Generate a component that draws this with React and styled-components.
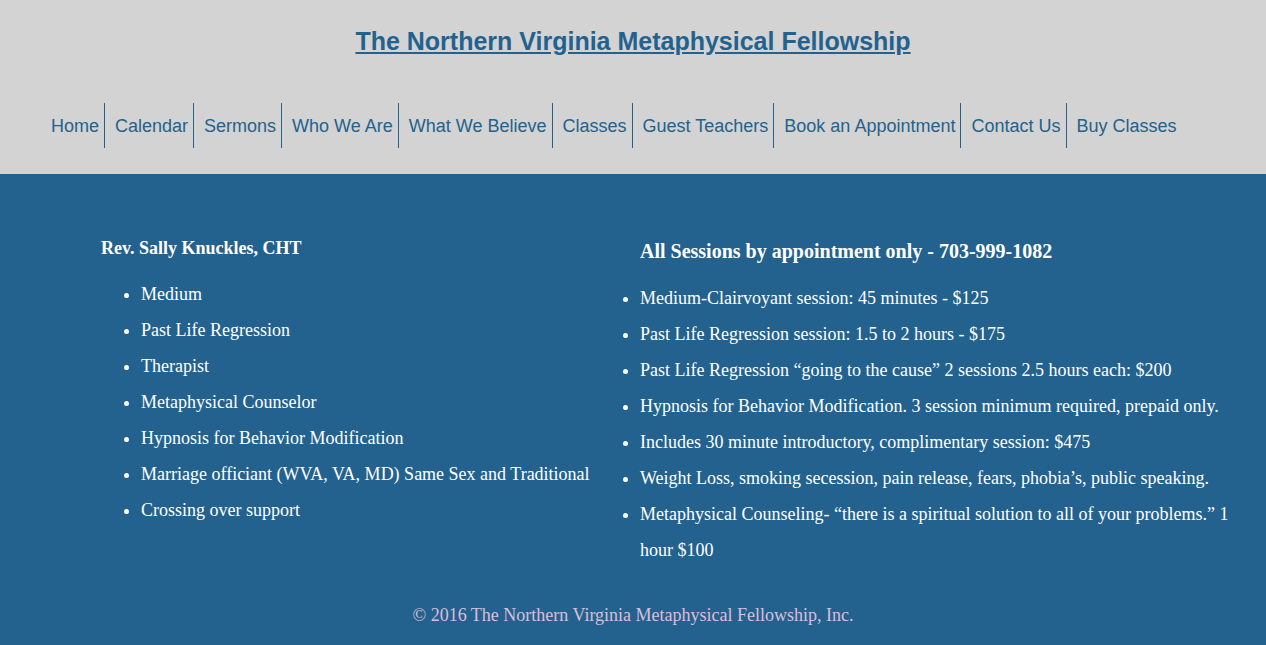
import React from "react";
import styled, { createGlobalStyle } from "styled-components";

const Global = createGlobalStyle`
  html, body { margin: 0; padding: 0; height: 100%; }
  body { background: #d3d3d3; }
  #root { min-height: 100%; display: flex; flex-direction: column; }
`;

const BLUE = "#23628e";

const Page = styled.div`
  flex: 1;
  display: flex;
  flex-direction: column;
  min-height: 100vh;
`;

const Header = styled.header`
  background: #d3d3d3;
  padding: 26px 0 26px 0;
`;

const Title = styled.h1`
  margin: 0;
  text-align: center;
  font-family: "Liberation Sans", Arial, sans-serif;
  font-size: 25px;
  line-height: 30px;
  font-weight: bold;
  a {
    color: ${BLUE};
    text-decoration: underline;
  }
`;

const Nav = styled.nav`
  margin-top: 47px;
  display: flex;
  padding-left: 51px;
`;

const NavItem = styled.a`
  display: flex;
  align-items: center;
  box-sizing: border-box;
  height: 45px;
  padding: 2px 5px 0 ${(p) => (p.$first ? "0" : "10px")};
  border-right: ${(p) => (p.$last ? "none" : `1px solid ${BLUE}`)};
  font-family: "Liberation Sans", Arial, sans-serif;
  font-size: 18px;
  color: ${BLUE};
  text-decoration: none;
  white-space: nowrap;
`;

const Main = styled.main`
  flex: 1;
  background: ${BLUE};
  display: flex;
  flex-direction: column;
  color: #fff;
  font-family: "Liberation Serif", "Times New Roman", serif;
`;

const Columns = styled.div`
  display: flex;
  padding: 0 21px 0 101px;
`;

const Column = styled.section`
  flex: ${(p) => (p.$grow ? "1" : "0 0 499px")};
`;

const Heading = styled.h2`
  margin: ${(p) => p.$top}px 0 0 ${(p) => p.$indent || 0}px;
  font-size: ${(p) => p.$size}px;
  line-height: ${(p) => p.$size + 4}px;
  font-weight: bold;
`;

const List = styled.ul`
  margin: 17px 0 0 0;
  padding-left: 40px;
`;

const Item = styled.li`
  font-size: 18px;
  line-height: 36px;
`;

const Footer = styled.footer`
  margin-top: 37px;
  padding-bottom: 22px;
  text-align: center;
  color: #d8bfd8;
  font-size: 18px;
  line-height: 20px;
`;

const navItems = [
  "Home",
  "Calendar",
  "Sermons",
  "Who We Are",
  "What We Believe",
  "Classes",
  "Guest Teachers",
  "Book an Appointment",
  "Contact Us",
  "Buy Classes",
];

const skills = [
  "Medium",
  "Past Life Regression",
  "Therapist",
  "Metaphysical Counselor",
  "Hypnosis for Behavior Modification",
  "Marriage officiant (WVA, VA, MD) Same Sex and Traditional",
  "Crossing over support",
];

const sessions = [
  "Medium-Clairvoyant session: 45 minutes - $125",
  "Past Life Regression session: 1.5 to 2 hours - $175",
  "Past Life Regression \u201cgoing to the cause\u201d 2 sessions 2.5 hours each: $200",
  "Hypnosis for Behavior Modification. 3 session minimum required, prepaid only.",
  "Includes 30 minute introductory, complimentary session: $475",
  "Weight Loss, smoking secession, pain release, fears, phobia\u2019s, public speaking.",
  "Metaphysical Counseling- \u201cthere is a spiritual solution to all of your problems.\u201d 1 hour $100",
];

export default function App() {
  return (
    <Page>
      <Global />
      <Header>
        <Title>
          <a href="#">The Northern Virginia Metaphysical Fellowship</a>
        </Title>
        <Nav>
          {navItems.map((n, i) => (
            <NavItem
              key={n}
              href="#"
              $first={i === 0}
              $last={i === navItems.length - 1}
            >
              {n}
            </NavItem>
          ))}
        </Nav>
      </Header>
      <Main>
        <Columns>
          <Column>
            <Heading $top={63} $size={18}>
              Rev. Sally Knuckles, CHT
            </Heading>
            <List>
              {skills.map((s) => (
                <Item key={s}>{s}</Item>
              ))}
            </List>
          </Column>
          <Column $grow>
            <Heading $top={65} $size={20} $indent={40}>
              All Sessions by appointment only - 703-999-1082
            </Heading>
            <List>
              {sessions.map((s) => (
                <Item key={s}>{s}</Item>
              ))}
            </List>
          </Column>
        </Columns>
        <Footer>© 2016 The Northern Virginia Metaphysical Fellowship, Inc.</Footer>
      </Main>
    </Page>
  );
}
